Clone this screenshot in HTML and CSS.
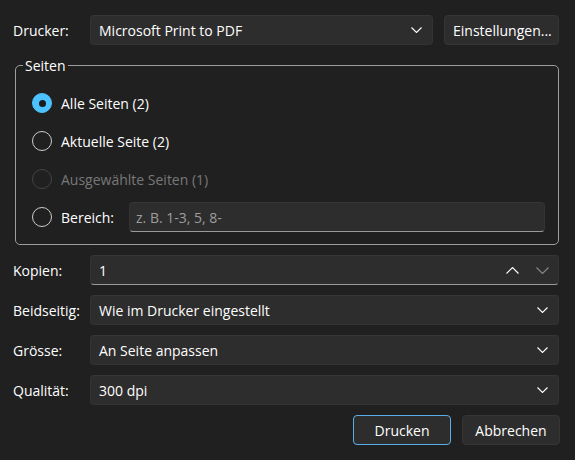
FILE: index.html
```html
<!DOCTYPE html>
<html lang="de">
<head>
    <meta charset="UTF-8">
    <meta name="viewport" content="width=device-width, initial-scale=1.0">
    <title>Drucken</title>
    <link rel="stylesheet" href="styles.css">
</head>
<body>
    <div class="dialog">
        <div class="row">
            <label class="lbl">Drucker:</label>
            <div class="combo">
                <span>Microsoft Print to PDF</span>
                <svg class="chev" width="11" height="6" viewBox="0 0 11 6"><path d="M0.5 0.5l5 5 5-5" /></svg>
            </div>
            <button class="btn settings">Einstellungen...</button>
        </div>

        <fieldset class="pages">
            <legend>Seiten</legend>
            <div class="radios">
                <div class="radio-row">
                    <span class="radio checked"></span>
                    <span>Alle Seiten (2)</span>
                </div>
                <div class="radio-row">
                    <span class="radio"></span>
                    <span>Aktuelle Seite (2)</span>
                </div>
                <div class="radio-row disabled">
                    <span class="radio"></span>
                    <span>Ausgewählte Seiten (1)</span>
                </div>
                <div class="radio-row range">
                    <span class="radio"></span>
                    <span class="range-lbl">Bereich:</span>
                    <div class="textbox range-box"><span class="placeholder">z. B. 1-3, 5, 8-</span></div>
                </div>
            </div>
        </fieldset>

        <div class="rows">
            <div class="row">
                <label class="lbl">Kopien:</label>
                <div class="textbox copies">
                    <span>1</span>
                    <div class="spin">
                        <svg class="chev" width="13" height="7" viewBox="0 0 13 7"><path d="M0.5 6.5l6-6 6 6" /></svg>
                        <svg class="chev dim" width="13" height="7" viewBox="0 0 13 7"><path d="M0.5 0.5l6 6 6-6" /></svg>
                    </div>
                </div>
            </div>
            <div class="row">
                <label class="lbl">Beidseitig:</label>
                <div class="combo">
                    <span>Wie im Drucker eingestellt</span>
                    <svg class="chev" width="11" height="6" viewBox="0 0 11 6"><path d="M0.5 0.5l5 5 5-5" /></svg>
                </div>
            </div>
            <div class="row">
                <label class="lbl">Grösse:</label>
                <div class="combo">
                    <span>An Seite anpassen</span>
                    <svg class="chev" width="11" height="6" viewBox="0 0 11 6"><path d="M0.5 0.5l5 5 5-5" /></svg>
                </div>
            </div>
            <div class="row">
                <label class="lbl">Qualität:</label>
                <div class="combo">
                    <span>300 dpi</span>
                    <svg class="chev" width="11" height="6" viewBox="0 0 11 6"><path d="M0.5 0.5l5 5 5-5" /></svg>
                </div>
            </div>
        </div>

        <div class="actions">
            <button class="btn primary">Drucken</button>
            <button class="btn">Abbrechen</button>
        </div>
    </div>
</body>
</html>
```

FILE: styles.css
```css
body {
    margin: 0;
    background-color: #202020;
    color: #ffffff;
    font-family: "Open Sans", "Noto Sans", sans-serif;
    font-size: 14px;
}
.dialog {
    padding: 15px 16px 0 13px;
}
.row {
    display: flex;
    align-items: center;
    height: 30px;
}
.lbl {
    width: 77px;
    flex-shrink: 0;
}
.combo, .textbox {
    flex: 1;
    height: 30px;
    box-sizing: border-box;
    display: flex;
    align-items: center;
    justify-content: space-between;
    padding: 0 10px 0 8px;
    background-color: #2d2d2d;
    border: 1px solid #333333;
    border-top-color: #363636;
    border-radius: 4px;
}
.textbox {
    border-bottom-color: #9a9a9a;
}
.chev {
    fill: none;
    stroke: #ffffff;
    stroke-width: 1.1;
}
.chev.dim {
    stroke: #8a8a8a;
}
.btn {
    height: 30px;
    box-sizing: border-box;
    padding: 0 8px;
    background-color: #2d2d2d;
    color: #ffffff;
    border: 1px solid #353535;
    border-radius: 4px;
    font-family: inherit;
    font-size: 14px;
}
.settings {
    margin-left: 11px;
    width: 115px;
    white-space: nowrap;
}
.pages {
    margin: 11px 0 0 2px;
    padding: 0 13px 8px 7px;
    border: 1px solid #9d9d9d;
    border-radius: 5px;
}
.pages legend {
    padding: 0 2px;
    line-height: 19px;
}
.radios {
    padding: 9px 0 0 9px;
}
.radio-row {
    display: flex;
    align-items: center;
    height: 38px;
}
.radio {
    width: 20px;
    height: 20px;
    box-sizing: border-box;
    border: 1px solid #cdcdcd;
    border-radius: 50%;
    margin-right: 9px;
    display: flex;
    align-items: center;
    justify-content: center;
}
.radio.checked {
    background-color: #4cc2ff;
    border-color: #4cc2ff;
}
.radio.checked::after {
    content: "";
    width: 7px;
    height: 7px;
    border-radius: 50%;
    background-color: #1c1c1c;
}
.disabled {
    color: #787878;
}
.disabled .radio {
    border-color: #434343;
}
.range-lbl {
    width: 68px;
}
.range-box {
    padding-left: 6px;
}
.placeholder {
    color: #9d9d9d;
}
.rows {
    margin-top: 10px;
    display: flex;
    flex-direction: column;
    gap: 10px;
}
.copies {
    padding-right: 9px;
}
.spin {
    display: flex;
    gap: 17px;
    align-items: center;
}
.actions {
    margin-top: 10px;
    display: flex;
    justify-content: flex-end;
    gap: 11px;
    margin-right: -1px;
}
.actions .btn {
    width: 98px;
    padding: 0;
}
.primary {
    border-color: #5aaee8;
}
```
